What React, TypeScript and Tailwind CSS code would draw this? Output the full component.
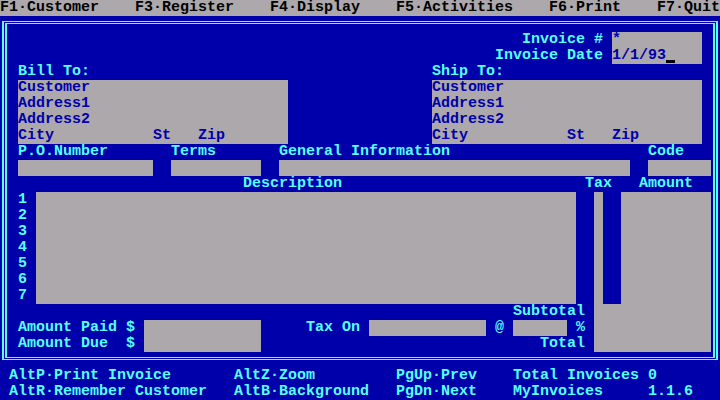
import React from "react";

// 80x25 text-mode screen: every cell is 9px wide and 16px tall
const Field: React.FC<{ className: string; children?: React.ReactNode }> = ({
  className,
  children,
}) => <div className={`bg-[#aca8ac] text-[#0000aa] ${className}`}>{children}</div>;

const Label: React.FC<{ className: string; children: React.ReactNode }> = ({
  className,
  children,
}) => <div className={`text-[#55ffff] ${className}`}>{children}</div>;

const App: React.FC = () => {
  return (
    <div className="grid h-[400px] w-[720px] grid-cols-[repeat(80,9px)] grid-rows-[repeat(25,16px)] overflow-hidden whitespace-pre bg-[#0000aa] font-['Liberation_Mono',monospace] text-[15px] leading-[16px] font-bold">
      {/* Menu bar */}
      <div className="col-span-80 col-start-1 row-start-1 bg-[#aca8ac]" />
      <div className="col-span-11 col-start-1 row-start-1 text-black">F1·Customer</div>
      <div className="col-span-11 col-start-16 row-start-1 text-black">F3·Register</div>
      <div className="col-span-10 col-start-31 row-start-1 text-black">F4·Display</div>
      <div className="col-span-13 col-start-45 row-start-1 text-black">F5·Activities</div>
      <div className="col-span-8 col-start-62 row-start-1 text-black">F6·Print</div>
      <div className="col-span-7 col-start-74 row-start-1 text-black">F7·Quit</div>

      {/* Double frame */}
      <div className="col-span-80 col-start-1 row-span-22 row-start-2 px-[2px] pt-[5px] pb-[8px]">
        <div className="h-full border-x-2 border-y border-[#55ffff] p-px">
          <div className="h-full border-x-2 border-y border-[#55ffff]" />
        </div>
      </div>

      {/* Invoice header */}
      <Label className="col-span-9 col-start-59 row-start-3">Invoice #</Label>
      <Label className="col-span-12 col-start-56 row-start-4">Invoice Date</Label>
      <Field className="col-span-10 col-start-69 row-span-2 row-start-3" />
      <div className="col-span-1 col-start-69 row-start-3 text-[#0000aa]">*</div>
      <div className="col-span-6 col-start-69 row-start-4 text-[#0000aa]">1/1/93</div>
      <div className="col-span-1 col-start-75 row-start-4 flex flex-col justify-end pb-px">
        <div className="h-[3px] w-[9px] bg-black" />
      </div>

      {/* Addresses */}
      <Label className="col-span-8 col-start-3 row-start-5">Bill To:</Label>
      <Label className="col-span-8 col-start-49 row-start-5">Ship To:</Label>
      <Field className="col-span-30 col-start-3 row-span-4 row-start-6 flex flex-col">
        <div>Customer</div>
        <div>Address1</div>
        <div>Address2</div>
        <div>{"City           St   Zip"}</div>
      </Field>
      <Field className="col-span-30 col-start-49 row-span-4 row-start-6 flex flex-col">
        <div>Customer</div>
        <div>Address1</div>
        <div>Address2</div>
        <div>{"City           St   Zip"}</div>
      </Field>

      {/* Order info */}
      <Label className="col-span-10 col-start-3 row-start-10">P.O.Number</Label>
      <Label className="col-span-5 col-start-20 row-start-10">Terms</Label>
      <Label className="col-span-19 col-start-32 row-start-10">General Information</Label>
      <Label className="col-span-4 col-start-73 row-start-10">Code</Label>
      <Field className="col-span-15 col-start-3 row-start-11" />
      <Field className="col-span-10 col-start-20 row-start-11" />
      <Field className="col-span-39 col-start-32 row-start-11" />
      <Field className="col-span-7 col-start-73 row-start-11" />

      {/* Line items */}
      <Label className="col-span-11 col-start-28 row-start-12">Description</Label>
      <Label className="col-span-3 col-start-66 row-start-12">Tax</Label>
      <Label className="col-span-6 col-start-72 row-start-12">Amount</Label>
      <div className="col-span-1 col-start-3 row-span-7 row-start-13 flex flex-col text-[#55ffff]">
        {["1", "2", "3", "4", "5", "6", "7"].map((n) => (
          <div key={n}>{n}</div>
        ))}
      </div>
      <Field className="col-span-60 col-start-5 row-span-7 row-start-13" />
      <Field className="col-span-1 col-start-67 row-span-7 row-start-13" />
      <Field className="col-span-10 col-start-70 row-span-7 row-start-13" />
      <Field className="col-span-13 col-start-67 row-span-3 row-start-20" />

      {/* Totals */}
      <Label className="col-span-8 col-start-58 row-start-20">Subtotal</Label>
      <Label className="col-span-13 col-start-3 row-start-21">Amount Paid $</Label>
      <Label className="col-span-13 col-start-3 row-start-22">Amount Due  $</Label>
      <Field className="col-span-13 col-start-17 row-span-2 row-start-21" />
      <Label className="col-span-6 col-start-35 row-start-21">Tax On</Label>
      <Field className="col-span-13 col-start-42 row-start-21" />
      <Label className="col-span-1 col-start-56 row-start-21">@</Label>
      <Field className="col-span-6 col-start-58 row-start-21" />
      <Label className="col-span-1 col-start-65 row-start-21">%</Label>
      <Label className="col-span-5 col-start-61 row-start-22">Total</Label>

      {/* Status lines */}
      <Label className="col-span-18 col-start-2 row-start-24">AltP·Print Invoice</Label>
      <Label className="col-span-9 col-start-27 row-start-24">AltZ·Zoom</Label>
      <Label className="col-span-9 col-start-45 row-start-24">PgUp·Prev</Label>
      <Label className="col-span-16 col-start-58 row-start-24">Total Invoices 0</Label>
      <Label className="col-span-22 col-start-2 row-start-25">AltR·Remember Customer</Label>
      <Label className="col-span-15 col-start-27 row-start-25">AltB·Background</Label>
      <Label className="col-span-9 col-start-45 row-start-25">PgDn·Next</Label>
      <Label className="col-span-10 col-start-58 row-start-25">MyInvoices</Label>
      <Label className="col-span-5 col-start-73 row-start-25">1.1.6</Label>
    </div>
  );
};

export default App;
